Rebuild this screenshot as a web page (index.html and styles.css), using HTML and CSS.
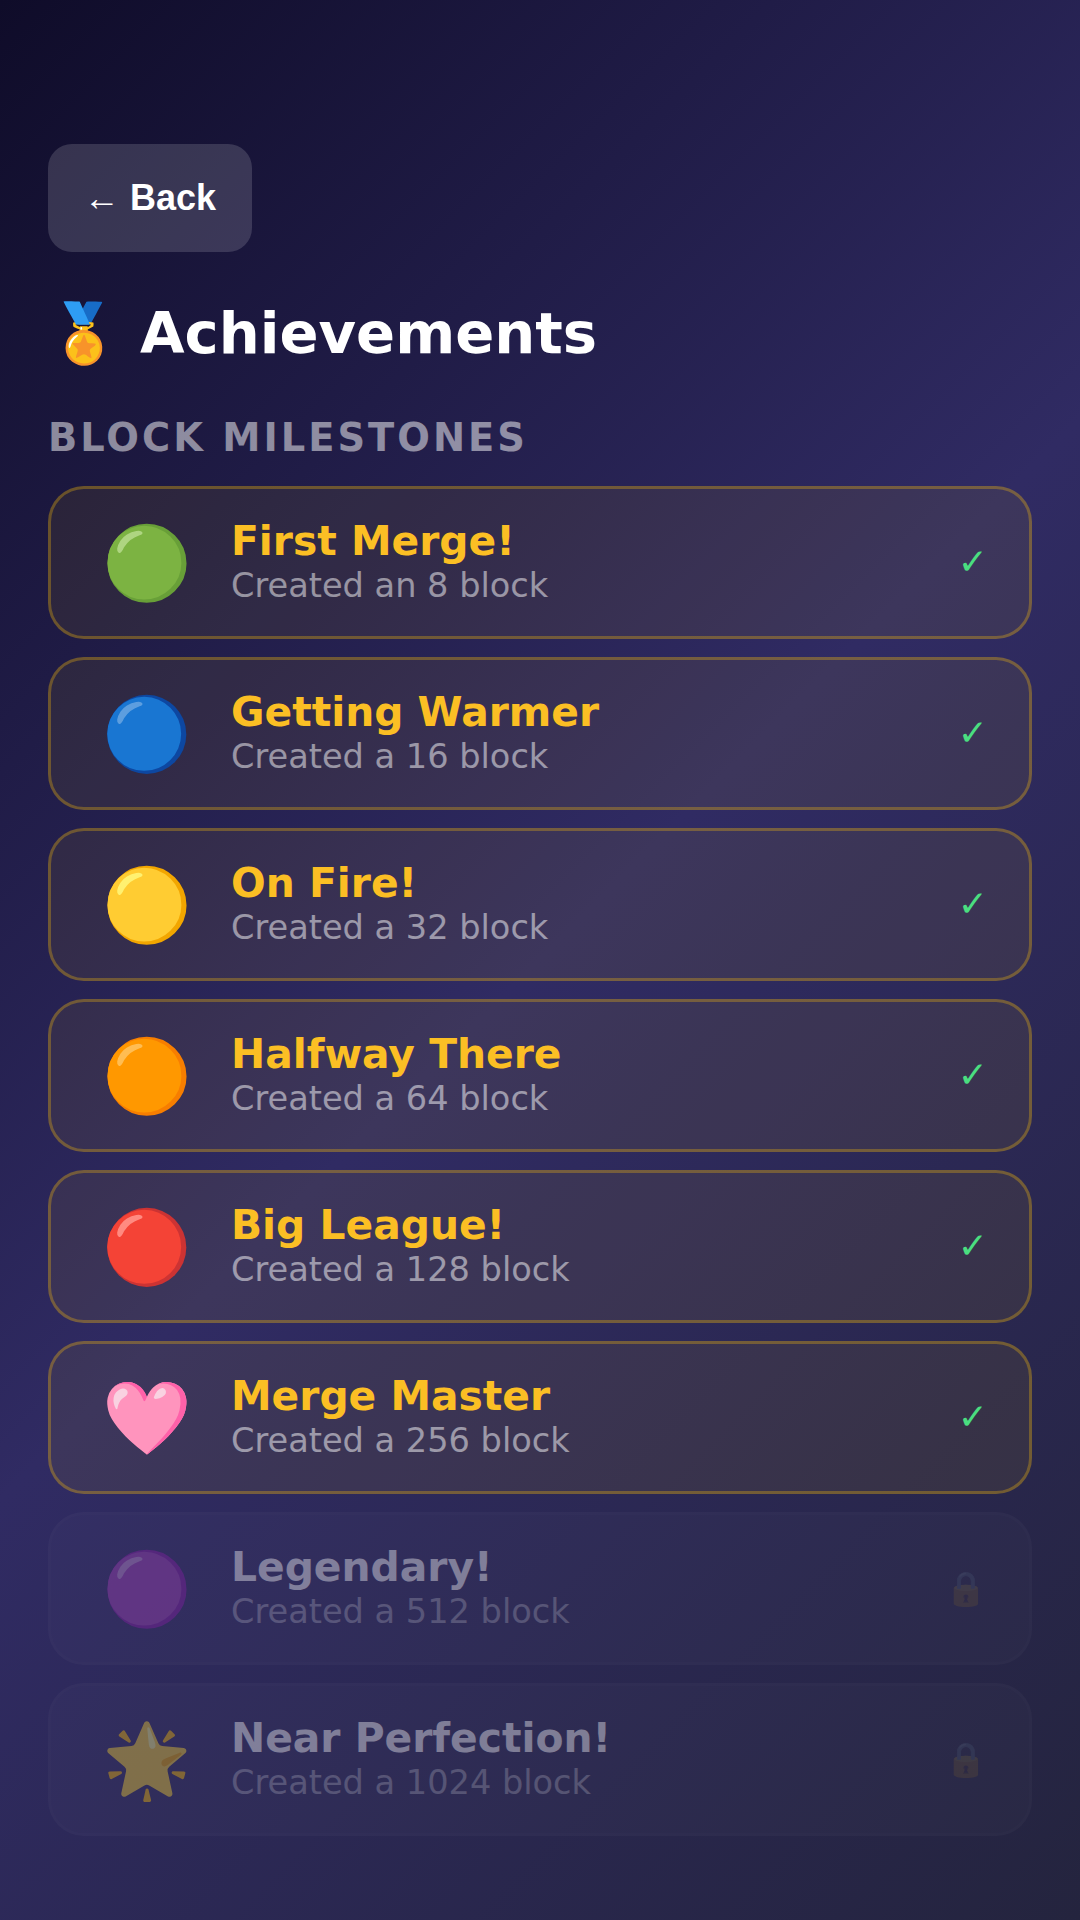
FILE: index.html

```html
<!doctype html>
<html lang="en">
<head>
  <meta charset="UTF-8">
  <meta name="viewport" content="width=device-width, initial-scale=1">
  <title>Achievements</title>
  <link rel="stylesheet" href="styles.css">
</head>
<body>
  <div class="screen">
    <button class="back">← Back</button>
    <h1 class="title">🏅 Achievements</h1>
    <h2 class="section">Block Milestones</h2>
    <div class="list">
      <div class="card done">
        <div class="icon">🟢</div>
        <div class="info"><div class="name">First Merge!</div><div class="desc">Created an 8 block</div></div>
        <div class="status">✓</div>
      </div>
      <div class="card done">
        <div class="icon">🔵</div>
        <div class="info"><div class="name">Getting Warmer</div><div class="desc">Created a 16 block</div></div>
        <div class="status">✓</div>
      </div>
      <div class="card done">
        <div class="icon">🟡</div>
        <div class="info"><div class="name">On Fire!</div><div class="desc">Created a 32 block</div></div>
        <div class="status">✓</div>
      </div>
      <div class="card done">
        <div class="icon">🟠</div>
        <div class="info"><div class="name">Halfway There</div><div class="desc">Created a 64 block</div></div>
        <div class="status">✓</div>
      </div>
      <div class="card done">
        <div class="icon">🔴</div>
        <div class="info"><div class="name">Big League!</div><div class="desc">Created a 128 block</div></div>
        <div class="status">✓</div>
      </div>
      <div class="card done">
        <div class="icon">🩷</div>
        <div class="info"><div class="name">Merge Master</div><div class="desc">Created a 256 block</div></div>
        <div class="status">✓</div>
      </div>
      <div class="card locked">
        <div class="icon">🟣</div>
        <div class="info"><div class="name">Legendary!</div><div class="desc">Created a 512 block</div></div>
        <div class="status">🔒</div>
      </div>
      <div class="card locked">
        <div class="icon">🌟</div>
        <div class="info"><div class="name">Near Perfection!</div><div class="desc">Created a 1024 block</div></div>
        <div class="status">🔒</div>
      </div>
    </div>
  </div>
</body>
</html>
```

FILE: styles.css

```css
*{
  margin: 0;
  padding: 0;
  box-sizing: border-box;
}
html, body{
  height: 100%;
}
body{
  font-family: "DejaVu Sans", sans-serif;
  background: linear-gradient(135deg, #0f0c29 0%, #302b63 50%, #24243e 100%);
  color: #fff;
}
.screen{
  padding: 144px 48px 0;
}
.back{
  display: block;
  height: 108px;
  padding: 0 36px;
  border: 0;
  border-radius: 24px;
  background: rgba(255,255,255,0.15);
  color: #fff;
  font-family: "Liberation Sans", "DejaVu Sans", sans-serif;
  font-size: 36px;
  font-weight: bold;
}
.title{
  margin-top: 46px;
  font-size: 57.6px;
  line-height: 72px;
  font-weight: bold;
}
.section{
  margin-top: 44px;
  font-size: 38.4px;
  font-weight: bold;
  line-height: 47px;
  letter-spacing: 3px;
  text-transform: uppercase;
  color: rgba(255,255,255,0.5);
}
.list{
  display: flex;
  flex-direction: column;
  gap: 18px;
  margin-top: 25px;
}
.card{
  display: flex;
  align-items: center;
  gap: 24px;
  height: 153px;
  padding: 0 36px;
  border: 3px solid rgba(255,193,7,0.3);
  border-radius: 36px;
  background: rgba(255,215,0,0.065);
}
.locked{
  border-color: rgba(255,255,255,0.03);
  background: rgba(255,255,255,0.05);
  opacity: 0.4;
}
.icon{
  width: 120px;
  padding-top: 2px;
  font-size: 72px;
  text-align: center;
}
.info{
  flex: 1;
}
.name{
  font-size: 40.8px;
  line-height: 47px;
  font-weight: bold;
  color: #fbbf24;
}
.locked .name{
  color: #fff;
}
.desc{
  font-size: 33.6px;
  line-height: 42px;
  color: rgba(255,255,255,0.5);
}
.status{
  margin-right: 5px;
  padding-bottom: 2px;
  font-size: 36px;
  font-weight: bold;
  color: #4ade80;
}
.locked .status{
  margin-right: 6px;
  padding-bottom: 0;
  font-size: 33.6px;
  opacity: 0.25;
}
```
